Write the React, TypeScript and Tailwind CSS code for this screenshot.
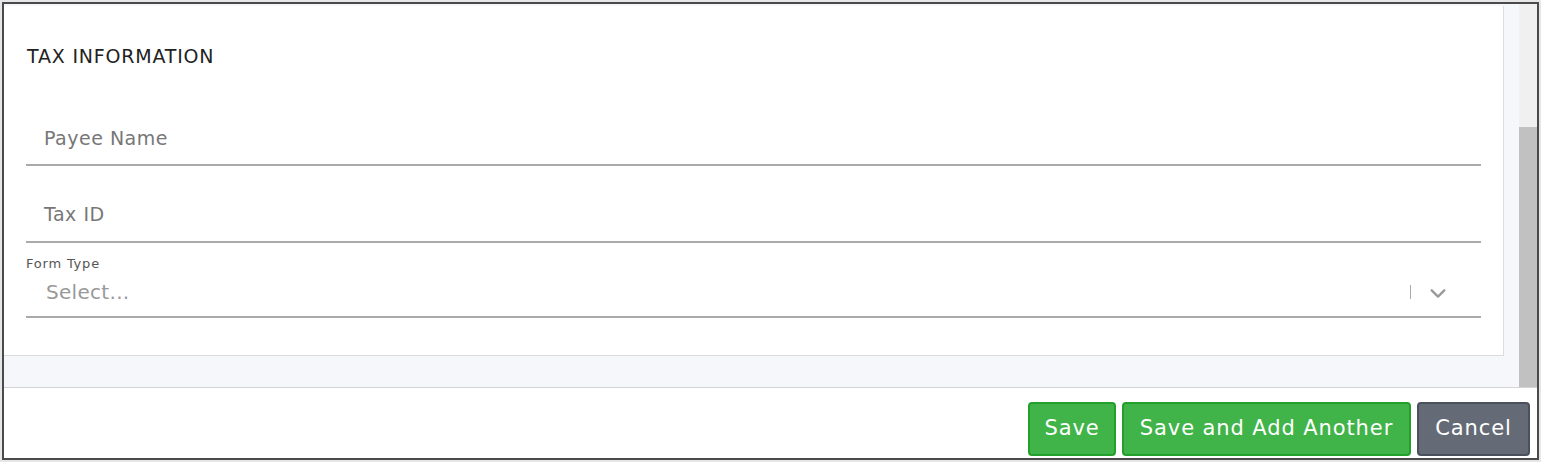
import React from "react";

export default function App() {
  const font = { fontFamily: '"DejaVu Sans", "Open Sans", sans-serif' };
  return (
    <div className="w-[1541px] h-[462px] bg-[#e6e6e6] p-[2px]" style={font}>
      <div className="h-full border-2 border-[#4a4a4a] bg-white flex flex-col">
        <div className="flex-1 flex bg-[#f5f7fa] min-h-0">
          <div className="flex-1 pr-[15px] min-w-0">
            <div className="bg-white border-r border-b border-[#dcdcdc] mt-[2px] h-[350px] pl-[22px] pr-[22px] pt-[38px]">
              <div className="text-[19px] tracking-[0.8px] text-[#222] leading-[24px] pl-px">TAX INFORMATION</div>
              <div className="border-b-2 border-[#aaaaaa] h-[98px] flex items-end pl-[18px] pb-[14px] text-[19px] tracking-[0.5px] leading-[24px] text-[#777]">
                Payee Name
              </div>
              <div className="border-b-2 border-[#aaaaaa] h-[77px] flex items-end pl-[18px] pb-[15px] text-[19px] tracking-[0.5px] leading-[24px] text-[#777]">
                Tax ID
              </div>
              <div className="pt-[13px]">
                <div className="text-[13px] tracking-[0.8px] leading-[16px] text-[#555]">Form Type</div>
                <div className="border-b-2 border-[#aaaaaa] h-[46px] flex items-end pl-[20px] pr-[34px] pb-[10px]">
                  <span className="flex-1 text-[20px] tracking-[0.3px] leading-[28px] text-[#999]">Select...</span>
                  <span className="w-px h-[14px] bg-[#aaa] mr-[18px] mb-[7px]" />
                  <svg width="18" height="18" viewBox="0 0 20 20" className="text-[#999] mb-[4px]">
                    <path d="M3 7l7 7 7-7" fill="none" stroke="currentColor" strokeWidth="2.6" strokeLinecap="round" strokeLinejoin="round" />
                  </svg>
                </div>
              </div>
            </div>
          </div>
          <div className="w-[18px] flex flex-col bg-[#f0f0f0]">
            <div className="h-[123px]" />
            <div className="flex-1 bg-[#c1c1c1]" />
          </div>
        </div>
        <div className="h-[71px] border-t border-[#d4d4d4] flex items-start justify-end gap-[6px] pt-[14px] pr-[7px]">
          <button className="h-[54px] w-[88px] rounded-[4px] bg-[#40b349] border-2 border-[#23a02c] text-white text-[21px] tracking-[0.9px]">Save</button>
          <button className="h-[54px] w-[289px] rounded-[4px] bg-[#40b349] border-2 border-[#23a02c] text-white text-[21px] tracking-[0.9px]">Save and Add Another</button>
          <button className="h-[54px] w-[113px] rounded-[4px] bg-[#646b76] border-2 border-[#4b515a] text-white text-[21px] tracking-[0.9px]">Cancel</button>
        </div>
      </div>
    </div>
  );
}
